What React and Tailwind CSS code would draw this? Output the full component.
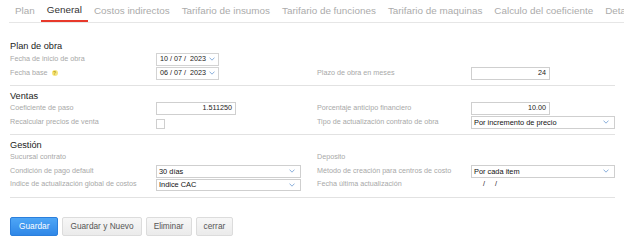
import React from 'react';

const tabs = [
    'Plan',
    'General',
    'Costos indirectos',
    'Tarifario de insumos',
    'Tarifario de funciones',
    'Tarifario de maquinas',
    'Calculo del coeficiente',
    'Detalle',
];

const Chevron = () => (
    <svg width="6" height="4" viewBox="0 0 6 4" className="shrink-0">
        <polyline points="0.5,0.6 3,3.2 5.5,0.6" fill="none" stroke="#7ea6d6" strokeWidth="0.9" />
    </svg>
);

const Label = ({ children, w }) => (
    <div className={`${w} shrink-0 text-[7.2px] text-[#a8a8a8] flex items-center gap-[4px]`}>{children}</div>
);

const Input = ({ value, w }) => (
    <div className={`${w} h-[13px] border border-[#cfcfcf] bg-white flex items-center justify-end pr-[3px] text-[7.2px] text-[#222]`}>
        {value}
    </div>
);

const Select = ({ value, w }) => (
    <div className={`${w} h-[12.5px] border border-[#cfcfcf] bg-white flex items-center justify-between pl-[2px] pr-[5px] text-[7.4px] text-[#111]`}>
        <span>{value}</span>
        <Chevron />
    </div>
);

const DateBox = ({ value }) => (
    <div className="w-[63px] h-[13px] border border-[#d3d3d3] bg-white flex items-center justify-between pl-[3px] pr-[3px] text-[7.2px] text-[#222]">
        <span className="whitespace-pre">{value}</span>
        <Chevron />
    </div>
);

const Row = ({ h, left, right }) => (
    <div className={`grid grid-cols-[307px_1fr] ${h}`}>
        <div className="flex items-center">{left}</div>
        <div className="flex items-center">{right}</div>
    </div>
);

const Section = ({ title, children }) => (
    <section className="mr-[9px] border-b border-[#e2e2e2] pt-[4px] pb-[5px]">
        <h3 className="h-[12px] leading-[12px] text-[9.2px] text-[#222]">{title}</h3>
        {children}
    </section>
);

const L = 'w-[146px]';
const R = 'w-[154px]';

const greyBtn = 'h-[19px] px-[7px] rounded-[2px] border border-[#dcdcdc] bg-gradient-to-b from-[#f7f7f7] to-[#ebebeb] text-[#555] text-[8.3px]';

export default function App() {
    return (
        <div className="w-[624px] h-[243px] bg-white overflow-hidden" style={{ fontFamily: '"Liberation Sans", Arial, sans-serif' }}>
            {/* tabs */}
            <div className="ml-[9px] h-[23px] border-b border-[#e6e6e6] flex whitespace-nowrap overflow-hidden">
                {tabs.map((t) => (
                    <div
                        key={t}
                        className={`h-[22px] px-[6px] flex items-center text-[9.9px] ${
                            t === 'General' ? 'text-[#333] border-b-2 border-[#e8392b]' : 'text-[#ababab]'
                        }`}
                    >
                        {t}
                    </div>
                ))}
            </div>

            <div className="pl-[10px] mt-[13px]">
                <Section title="Plan de obra">
                    <Row
                        h="h-[14px]"
                        left={<><Label w={L}>Fecha de inicio de obra</Label><DateBox value="10 / 07 /  2023" /></>}
                        right={null}
                    />
                    <Row
                        h="h-[14px]"
                        left={
                            <>
                                <Label w={L}>
                                    Fecha base
                                    <span className="w-[6px] h-[6px] rounded-full bg-[#f7e680] text-[#b59a00] text-[5px] leading-[6px] text-center font-bold">?</span>
                                </Label>
                                <DateBox value="06 / 07 /  2023" />
                            </>
                        }
                        right={<><Label w={R}>Plazo de obra en meses</Label><Input w="w-[79px]" value="24" /></>}
                    />
                </Section>

                <Section title="Ventas">
                    <Row
                        h="h-[13.5px]"
                        left={<><Label w={L}>Coeficiente de paso</Label><Input w="w-[80px]" value="1.511250" /></>}
                        right={<><Label w={R}>Porcentaje anticipo financiero</Label><Input w="w-[79px]" value="10.00" /></>}
                    />
                    <Row
                        h="h-[13.5px]"
                        left={<><Label w={L}>Recalcular precios de venta</Label><div className="w-[9px] h-[10px] border border-[#cfcfcf] bg-white mt-[3px]" /></>}
                        right={<><Label w={R}>Tipo de actualización contrato de obra</Label><Select w="w-[144px]" value="Por incremento de precio" /></>}
                    />
                </Section>

                <Section title="Gestión">
                    <Row
                        h="h-[13.5px]"
                        left={<Label w={L}>Sucursal contrato</Label>}
                        right={<Label w={R}>Deposito</Label>}
                    />
                    <Row
                        h="h-[13.5px]"
                        left={<><Label w={L}>Condición de pago default</Label><Select w="w-[145px]" value="30 días" /></>}
                        right={<><Label w={R}>Método de creación para centros de costo</Label><Select w="w-[144px]" value="Por cada item" /></>}
                    />
                    <Row
                        h="h-[13.5px]"
                        left={<><Label w={L}>Indice de actualización global de costos</Label><Select w="w-[145px]" value="Indice CAC" /></>}
                        right={
                            <>
                                <Label w={R}>Fecha última actualización</Label>
                                <span className="pl-[12px] whitespace-pre text-[7.2px] text-[#222]">/     /</span>
                            </>
                        }
                    />
                </Section>

                <div className="mt-[19px] flex gap-[4px]">
                    <button className="h-[19px] px-[8px] rounded-[2px] border border-[#2b7fdc] bg-gradient-to-b from-[#4ea6f6] to-[#2f87e7] text-white text-[8.3px]">
                        Guardar
                    </button>
                    <button className={greyBtn}>Guardar y Nuevo</button>
                    <button className={greyBtn}>Eliminar</button>
                    <button className={greyBtn}>cerrar</button>
                </div>
            </div>
        </div>
    );
}
